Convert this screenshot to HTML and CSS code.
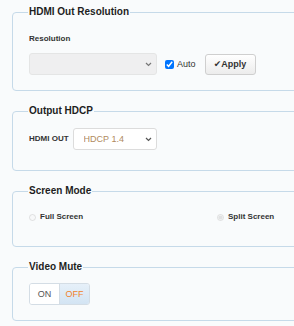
FILE: index.html
```html
<!DOCTYPE html>
<html lang="en">
<head>
    <meta charset="UTF-8">
    <meta name="viewport" content="width=device-width, initial-scale=1.0">
    <title>Output Settings</title>
    <link rel="stylesheet" href="styles.css">
</head>
<body>

    <fieldset class="panel panel-resolution">
        <legend>HDMI Out Resolution</legend>
        <div class="field-label">Resolution</div>
        <div class="row">
            <div class="select-wrap">
                <select class="select select-res" disabled></select>
                <svg class="chevron" width="7" height="5" viewBox="0 0 7 5"><path d="M1 1 L3.5 3.5 L6 1" fill="none" stroke="#777" stroke-width="1.2"/></svg>
            </div>
            <label class="check"><input type="checkbox" checked> Auto</label>
            <button class="apply-btn"><span class="tick">&#10004;</span>Apply</button>
        </div>
    </fieldset>

    <fieldset class="panel panel-hdcp">
        <legend>Output HDCP</legend>
        <div class="row">
            <span class="field-label inline">HDMI OUT</span>
            <div class="select-wrap">
                <select class="select select-hdcp">
                    <option>HDCP 1.4</option>
                    <option>HDCP 2.2</option>
                </select>
                <svg class="chevron" width="7" height="5" viewBox="0 0 7 5"><path d="M1 1 L3.5 3.5 L6 1" fill="none" stroke="#555" stroke-width="1.2"/></svg>
            </div>
        </div>
    </fieldset>

    <fieldset class="panel panel-mode">
        <legend>Screen Mode</legend>
        <div class="mode-grid">
            <label class="radio"><input type="radio" name="mode" disabled> Full Screen</label>
            <label class="radio"><input type="radio" name="mode" checked disabled> Split Screen</label>
        </div>
    </fieldset>

    <fieldset class="panel panel-mute">
        <legend>Video Mute</legend>
        <div class="toggle">
            <button class="toggle-btn">ON</button>
            <button class="toggle-btn active">OFF</button>
        </div>
    </fieldset>

</body>
</html>
```

FILE: styles.css
```css
html, body {
    overflow: hidden;
}

body {
    margin: 0;
    padding: 6px 0 0 12px;
    font-family: "Liberation Sans", Arial, sans-serif;
    background-color: #f9fbfc;
    color: #222;
    width: 440px;
}

.panel {
    margin: 0 0 14px 0;
    border: 1px solid #c6dae9;
    border-radius: 4px;
    padding: 0 16px 15px 16px;
    width: 390px;
}

.panel legend {
    font-size: 10px;
    font-weight: bold;
    line-height: 12px;
    padding: 0 1px;
    margin-left: -1px;
    color: #1e1e1e;
}

.field-label {
    font-size: 8px;
    font-weight: bold;
    line-height: 12px;
    color: #333;
}

.panel-resolution .field-label {
    margin-top: 15px;
}

.row {
    display: flex;
    align-items: center;
}

.panel-resolution .row {
    margin-top: 8px;
}

.select-wrap {
    position: relative;
    display: flex;
}

.select {
    appearance: none;
    height: 22px;
    border: 1px solid #dcdcdc;
    border-radius: 3px;
    font-family: "Liberation Sans", Arial, sans-serif;
    font-size: 9px;
    padding: 0 6px;
}

.chevron {
    position: absolute;
    right: 5px;
    top: 9px;
    pointer-events: none;
}

.select-res {
    width: 128px;
    background-color: #ebebeb;
}

.check {
    display: flex;
    align-items: center;
    font-size: 9px;
    color: #333;
    margin-left: 8px;
}

.check input {
    width: 9px;
    height: 9px;
    margin: 0 3px 0 0;
}

.apply-btn {
    margin-left: 9px;
    width: 51px;
    height: 21px;
    border: 1px solid #cfcfcf;
    border-radius: 3px;
    background: linear-gradient(#ffffff, #ececec);
    font-family: "Liberation Sans", Arial, sans-serif;
    font-size: 9px;
    font-weight: bold;
    color: #333;
    padding: 0;
}

.tick {
    font-family: "DejaVu Sans", sans-serif;
    font-size: 9px;
}

.panel-hdcp {
    padding-bottom: 20px;
}

.panel-hdcp .row {
    margin-top: 11px;
}

.field-label.inline {
    margin-right: 4px;
}

.select-hdcp {
    width: 84px;
    background-color: #fff;
    color: #b08a5e;
    padding-left: 10px;
}

.panel-mode {
    padding-bottom: 23px;
}

.mode-grid {
    display: grid;
    grid-template-columns: 188px 188px;
    margin-top: 14px;
}

.radio {
    display: flex;
    align-items: center;
    font-size: 8px;
    font-weight: bold;
    line-height: 12px;
    color: #333;
}

.radio input {
    width: 7px;
    height: 7px;
    margin: 0 4px 0 0;
    opacity: 0.6;
    filter: grayscale(1);
}

.panel-mute .toggle {
    margin-top: 10px;
}

.toggle {
    display: inline-flex;
    border: 1px solid #d4dde5;
    border-radius: 3px;
    overflow: hidden;
}

.toggle-btn {
    height: 20px;
    border: none;
    background: #fff;
    font-family: "Liberation Sans", Arial, sans-serif;
    font-size: 9px;
    color: #555;
    padding: 0;
    width: 29px;
}

.toggle-btn.active {
    width: 30px;
    background: linear-gradient(#e6f0f9, #d3e4f3);
    color: #f0832a;
    border-left: 1px solid #d4dde5;
}
```
